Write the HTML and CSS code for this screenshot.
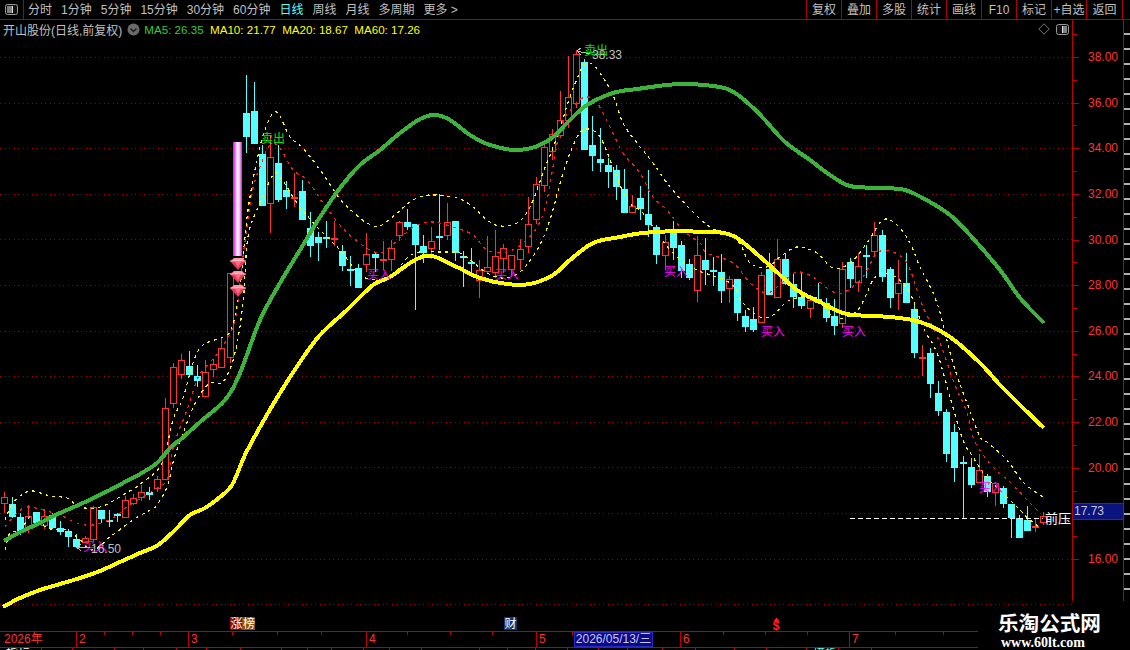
FILE: index.html
```html
<!DOCTYPE html>
<html lang="zh-CN">
<head>
<meta charset="utf-8">
<title>开山股份</title>
<link rel="stylesheet" href="styles.css">
</head>
<body>
<div class="page">
  <header class="toolbar">
    <div class="panel-toggle">
      <svg class="panel-icon" width="13" height="11" viewBox="0 0 13 11">
        <rect class="pi-frame" x="0.5" y="0.5" width="12" height="10" rx="2"/>
        <rect class="pi-left" x="2" y="2" width="5" height="7"/>
        <rect class="pi-mid" x="7" y="2" width="1" height="7"/>
      </svg>
    </div>
    <nav class="periods">
      <span>分时</span><span>1分钟</span><span>5分钟</span><span>15分钟</span><span>30分钟</span><span>60分钟</span>
      <span class="active">日线</span><span>周线</span><span>月线</span><span>多周期</span><span>更多 &gt;</span>
    </nav>
    <div class="actions">
      <span>复权</span><span>叠加</span><span>多股</span><span>统计</span><span>画线</span><span>F10</span><span>标记</span><span>+自选</span><span>返回</span>
    </div>
  </header>

  <div class="main">
    <section class="chart-pane">
      <div class="info">
        <span class="title">开山股份(日线,前复权)</span>
        <svg class="chev" width="13" height="13" viewBox="0 0 13 13">
          <circle class="chev-bg" cx="6.5" cy="6.5" r="6"/>
          <path class="chev-line" d="M3.5 5.5 L6.5 8.5 L9.5 5.5"/>
        </svg>
        <span class="ma green">MA5: 26.35</span>
        <span class="ma yellow">MA10: 21.77</span>
        <span class="ma yellow">MA20: 18.67</span>
        <span class="ma yellow">MA60: 17.26</span>
        <span class="info-tools">
          <svg width="12" height="12" viewBox="0 0 12 12"><path class="tool-line" d="M6 0.8 L11.2 6 L6 11.2 L0.8 6 Z"/></svg>
          <svg width="13" height="11" viewBox="0 0 13 11">
            <rect class="pi-frame" x="0.5" y="0.5" width="12" height="10" rx="2"/>
            <rect class="pi-right" x="7" y="2" width="4" height="7"/>
            <rect class="pi-mid" x="6" y="2" width="1" height="7"/>
          </svg>
        </span>
      </div>
      <svg id="chart" class="chart" width="1072" height="593" viewBox="0 38 1072 593">
        <defs>
          <linearGradient id="pinkbar" x1="0" x2="1" y1="0" y2="0">
            <stop offset="0" stop-color="#c81ec8"/>
            <stop offset="0.25" stop-color="#f070f0"/>
            <stop offset="0.5" stop-color="#ffffff"/>
            <stop offset="0.75" stop-color="#f8b0f8"/>
            <stop offset="1" stop-color="#c81ec8"/>
          </linearGradient>
          <g id="gem">
            <polygon class="gem-body" points="-8,-3 -4,-6 4,-6 8,-3 0,6"/>
            <polygon class="gem-top" points="-4,-6 4,-6 6,-3 -6,-3"/>
            <polygon class="gem-shine" points="-3,-2 3,-2 0,3"/>
            <path class="gem-edge" d="M-8 -3 L8 -3"/>
          </g>
        </defs>
        <g id="grid"></g>
        <g id="candles"></g>
        <g id="lines"></g>
        <rect class="pink" x="233" y="142" width="9" height="114"/>
        <use href="#gem" x="238" y="264"/>
        <use href="#gem" x="238" y="277"/>
        <use href="#gem" x="238" y="291"/>
        <line class="last-dash" x1="850" y1="518.5" x2="1043" y2="518.5"/>
        <text class="sig sell" x="261" y="143">卖出</text>
        <text class="sig sell" x="584" y="55">卖出</text>
        <text class="sig buy" x="367" y="279">买入</text>
        <text class="sig buy" x="495" y="279">买入</text>
        <text class="sig buy" x="664" y="276">买入</text>
        <text class="sig buy" x="761" y="336">买入</text>
        <text class="sig buy" x="842" y="336">买入</text>
        <text class="sig buy" x="979" y="492">买入</text>
        <text class="sig buy" x="83" y="551">买入</text>
        <path class="arrow" d="M90 547.5 H77 M81 544 L77 547.5 L81 551"/>
        <text class="extreme" x="91" y="553">16.50</text>
        <path class="arrow" d="M590 54 L577 51 M581 48 L577 51 L581 55"/>
        <text class="extreme" x="592" y="59">38.33</text>
        <text class="press" x="1045" y="523">前压力</text>
        <rect class="mk-red" x="230" y="617" width="13" height="13"/>
        <rect class="mk-brown" x="242" y="617" width="13" height="13"/>
        <rect class="mk-blue" x="504" y="617" width="13" height="13"/>
        <text class="mk-text" x="230.500" y="627.500">涨</text>
        <text class="mk-text" x="243" y="627.500">榜</text>
        <text class="mk-text" x="504.500" y="627.500">财</text>
        <path class="mk-up" d="M776 618 L779 621 H773 Z"/>
        <text class="mk-dollar" x="776" y="630">$</text>
      </svg>
    </section>
    <aside class="axis">
      <div class="tick"><span>38.00</span></div>
      <div class="tick"><span>36.00</span></div>
      <div class="tick"><span>34.00</span></div>
      <div class="tick"><span>32.00</span></div>
      <div class="tick"><span>30.00</span></div>
      <div class="tick"><span>28.00</span></div>
      <div class="tick"><span>26.00</span></div>
      <div class="tick"><span>24.00</span></div>
      <div class="tick"><span>22.00</span></div>
      <div class="tick"><span>20.00</span></div>
      <div class="tick"><span>18.00</span></div>
      <div class="tick"><span>16.00</span></div>
      <div class="price-tag">17.73</div>
    </aside>
    <div class="ruler"></div>
  </div>

  <footer class="timeline">
    <div class="t-cell">2026年</div>
    <div class="t-cell m">2</div>
    <div class="t-cell m">3</div>
    <div class="t-cell m">4</div>
    <div class="t-cell m">5</div>
    <div class="t-date">2026/05/13/三</div>
    <div class="t-cell"></div>
    <div class="t-cell m">6</div>
    <div class="t-cell m">7</div>
    <svg class="t-ticks" width="978" height="3" viewBox="0 0 978 3">
      <path d="M104 0V3M132 0V3M160 0V3M232 0V3M277 0V3M321 0V3M407 0V3M450 0V3M492 0V3M572 0V3M723 0V3M765 0V3M807 0V3M895 0V3M943 0V3"/>
    </svg>
  </footer>
  <div class="tabs">
    <i>指标</i><i></i><i></i><i></i><i></i><i></i><i></i><i></i><i></i><i></i><i></i><i></i><i></i><i></i><i></i><i></i><i></i><i></i><i></i><i></i><i></i><i></i><i></i><i></i><i class="cy">模板</i><i></i>
  </div>

  <div class="watermark">
    <div class="wm-cn">乐淘公式网</div>
    <div class="wm-en">www.60lt.com</div>
  </div>
</div>
<script src="chart.js"></script>
</body>
</html>
```
FILE: styles.css
```css
* { box-sizing: border-box; }
html, body { margin: 0; background: #000; }
body {
  width: 1130px;
  height: 650px;
  overflow: hidden;
  font-family: "Liberation Sans", "Noto Sans CJK SC", sans-serif;
  font-size: 12px;
  color: #c0c0c0;
}
.page { position: relative; width: 1130px; height: 650px; display: flex; flex-direction: column; }

/* toolbar */
.toolbar {
  height: 20px;
  display: flex;
  align-items: stretch;
  border-bottom: 1px solid #b00000;
  line-height: 21px;
  font-size: 12px;
}
.panel-toggle {
  width: 24px;
  border-right: 1px solid #b00000;
  display: flex;
  align-items: center;
  padding-left: 5px;
}
.pi-frame { fill: #111; stroke: #999; }
.pi-left { fill: #808080; }
.pi-right { fill: #808080; }
.pi-mid { fill: #e0e0e0; }
.periods { display: flex; gap: 9px; margin-left: 4px; }
.periods .active { color: #55ffff; }
.actions { margin-left: auto; margin-right: 7px; display: flex; }
.actions span {
  width: 35px;
  text-align: center;
  border-left: 1px solid #b00000;
}
.actions span:last-child { border-right: 1px solid #b00000; width: 37px; }

/* main */
.main { display: flex; align-items: flex-start; height: 611px; }
.chart-pane { width: 1072px; flex: none; display: flex; flex-direction: column; }
.info {
  height: 18px;
  display: flex;
  align-items: center;
  padding-left: 3px;
  padding-right: 3px;
  white-space: nowrap;
}
.title { color: #c0c0c0; }
.chev { margin-left: 5px; margin-right: 4px; }
.chev-bg { fill: #6a6a6a; }
.chev-line { fill: none; stroke: #1a1a1a; stroke-width: 1.4; }
.ma { font-size: 11.6px; margin-right: 6.4px; letter-spacing: 0; }
.green { color: #3cc83c; }
.yellow { color: #ffff00; }
.info-tools { margin-left: auto; display: flex; align-items: center; gap: 6px; }
.tool-line { fill: none; stroke: #777; }

.chart { display: block; overflow: hidden; shape-rendering: crispEdges; }
.grid-line { stroke: #a00000; stroke-width: 1; stroke-dasharray: 1 3.5; }
.wick-r { stroke: #ff3232; stroke-width: 1; }
.wick-c { stroke: #55ffff; stroke-width: 1; }
.body-r { fill: #000; stroke: #ff3232; stroke-width: 1; }
.flat-r { fill: #ff3232; }
.body-c { fill: #55ffff; }
.ma-long { fill: none; stroke: #3cb43c; stroke-width: 4; stroke-linejoin: round; }
.ma-mid { fill: none; stroke: #ffff00; stroke-width: 4; stroke-linejoin: round; }
.band { fill: none; stroke: #ffff00; stroke-width: 1.2; stroke-dasharray: 3 4; }
.ma-red { fill: none; stroke: #ff2020; stroke-width: 1.2; stroke-dasharray: 3 4.5; }
.pink { fill: url(#pinkbar); }
.gem-body { fill: #e83a5a; shape-rendering: auto; }
.gem-top { fill: #ff9aa8; shape-rendering: auto; }
.gem-shine { fill: #ff6a88; shape-rendering: auto; }
.gem-edge { stroke: #fff0f0; stroke-width: 0.7; fill: none; shape-rendering: auto; }
.last-dash { stroke: #fff; stroke-width: 1; stroke-dasharray: 5 3; }
.sig { font-family: "Noto Sans CJK SC", sans-serif; font-size: 12px; shape-rendering: auto; }
.sell { fill: #00e800; }
.buy { fill: #ff00ff; }
.extreme { font-size: 12px; fill: #c0c0c0; }
.arrow { fill: none; stroke: #c0c0c0; stroke-width: 1; }
.press { font-family: "Noto Sans CJK SC", sans-serif; font-size: 13px; fill: #fff; }
.mk-red { fill: #8c0a0a; }
.mk-brown { fill: #8a5000; }
.mk-blue { fill: #0a3a78; }
.mk-text { font-family: "Noto Sans CJK SC", sans-serif; font-size: 12px; fill: #fff; }
.mk-up { fill: #ff2020; }
.mk-dollar { font-size: 12px; font-weight: bold; fill: #ff2020; text-anchor: middle; }

/* price axis */
.axis {
  position: relative;
  width: 51px;
  flex: none;
  height: 581px;
  padding-top: 14.2px;
  border-left: 1px solid #c00000;
}
.tick {
  position: relative;
  height: 45.65px;
  display: flex;
  align-items: center;
  padding-left: 15px;
  color: #ff3232;
  font-size: 12px;
}
.tick::before {
  content: "";
  position: absolute;
  left: 0;
  top: 50%;
  width: 6px;
  height: 1px;
  background: #c00000;
}
.tick::after {
  content: "";
  position: absolute;
  left: 0;
  top: 0;
  width: 4px;
  height: 1px;
  background: #c00000;
}
.price-tag {
  position: absolute;
  left: 0;
  right: 0;
  top: 483px;
  height: 17px;
  background: #0a1480;
  border-top: 1px solid #c00000;
  border-bottom: 1px solid #c00000;
  color: #c8c8c8;
  line-height: 15px;
  padding-left: 1px;
}
.ruler {
  width: 7px;
  height: 581px;
  flex: none;
  border-left: 1px solid #c00000;
  background: repeating-linear-gradient(to bottom, #000 0, #000 13px, #b0b0b0 13px, #b0b0b0 15px);
}

/* time axis */
.timeline {
  position: relative;
  width: 978px;
  height: 16px;
  display: grid;
  grid-template-columns: 76px 112px 178px 170px 38px 79px 27px 169px 129px;
  border-top: 1px solid #c00000;
  color: #ff3232;
  font-size: 12px;
  line-height: 14px;
}
.t-cell { padding-left: 4px; white-space: nowrap; }
.t-cell.m { border-left: 1px solid #c00000; padding-left: 2px; }
.t-date {
  background: #0a0a8c;
  border: 1px solid #2a2ac0;
  color: #c8c8e0;
  text-align: center;
  line-height: 13px;
  white-space: nowrap;
}
.t-ticks { position: absolute; left: 0; top: 0; }
.t-ticks path { stroke: #c00000; stroke-width: 1; fill: none; shape-rendering: crispEdges; }

/* tab strip cut off at the bottom */
.tabs {
  width: 978px;
  height: 3px;
  overflow: hidden;
  border-top: 1px solid #c00000;
  display: grid;
  grid-template-columns: 42px 31px 42px 29px 33px 30px 34px 41px 26px 24px 32px 26px 32px 58px 28px 28px 32px 31px 29px 35px 33px 39px 32px 40px 32px 33px;
}
.tabs i {
  font-style: normal;
  font-size: 12px;
  line-height: 12px;
  border-right: 1px solid #c00000;
  color: #fff;
  padding-left: 6px;
}
.tabs .cy { color: #55ffff; }

/* watermark */
.watermark { position: absolute; left: 998px; top: 609px; }
.wm-cn {
  font-family: "Noto Sans CJK SC", sans-serif;
  font-weight: bold;
  font-size: 20.6px;
  line-height: 26px;
  color: #fff;
  white-space: nowrap;
}
.wm-en {
  font-family: "Liberation Serif", serif;
  font-weight: bold;
  font-size: 14px;
  line-height: 15px;
  color: #fff;
  padding-left: 3px;
  white-space: nowrap;
}
```
FILE: chart.js
```js
var NS = 'http://www.w3.org/2000/svg';
function el(parent, name, cls, attrs) {
  var n = document.createElementNS(NS, name);
  if (cls) n.setAttribute('class', cls);
  for (var k in attrs) n.setAttribute(k, attrs[k]);
  parent.appendChild(n);
  return n;
}

/* high, body top, body bottom, low, r = up (hollow red) / c = down (cyan) */
var candles = [
[492,497,503,513,'r'],[497,504,517,518,'c'],[513,517,532,535,'c'],[505,516,527,533,'r'],[512,512,523,525,'c'],
[509,516,525,529,'r'],[513,515,528,529,'c'],[521,528,532,535,'c'],[529,531,537,547,'c'],[534,539,547,547,'c'],
[536,538,542,543,'r'],[506,507,539,541,'r'],[510,510,519,523,'c'],[510,520,521,527,'c'],[513,514,516,522,'c'],
[496,500,517,517,'r'],[494,498,503,505,'r'],[485,492,497,501,'r'],[487,492,495,500,'c'],[476,479,488,492,'r'],
[398,408,479,480,'r'],[363,367,403,408,'r'],[354,360,374,379,'r'],[351,366,375,377,'c'],[365,376,381,387,'c'],
[360,372,396,397,'r'],[359,364,369,377,'r'],[338,348,367,368,'r'],[273,273,357,363,'r'],null,
[75,113,137,153,'c'],[82,111,144,144,'c'],[145,154,206,206,'c'],[135,157,203,233,'r'],[145,163,200,202,'c'],
[181,190,197,209,'c'],[173,197,199,207,'r'],[180,191,220,220,'c'],[212,228,246,257,'c'],[232,237,243,261,'c'],
[221,237,238,248,'c'],[221,238,239,246,'r'],[245,251,266,271,'c'],[256,269,270,286,'c'],[264,268,288,288,'c'],
[233,254,264,272,'r'],[252,254,258,272,'c'],[241,259,260,270,'r'],[240,248,259,271,'r'],[221,222,235,241,'r'],
[209,222,227,230,'c'],[224,224,245,310,'c'],[235,246,253,263,'c'],[227,241,248,259,'r'],[194,236,237,250,'c'],
[203,222,235,240,'r'],[221,221,253,261,'c'],[251,256,258,287,'c'],[248,262,264,274,'c'],[260,270,280,298,'r'],
[236,267,271,273,'r'],[230,256,272,278,'r'],[244,248,258,273,'r'],[255,255,269,277,'r'],[239,249,259,270,'r'],
[197,224,246,253,'r'],[177,184,219,224,'r'],[143,147,185,192,'r'],[129,134,151,160,'r'],[91,120,135,138,'r'],
[56,97,120,128,'r'],[50,54,103,108,'r'],[59,62,150,150,'c'],[116,145,156,171,'c'],[128,159,163,172,'c'],
[158,165,172,188,'c'],[165,170,187,200,'c'],[169,189,213,213,'c'],[195,206,212,212,'r'],[186,198,209,220,'c'],
[170,214,225,237,'c'],[225,227,255,264,'c'],[235,242,255,270,'r'],[221,229,248,260,'c'],[241,245,271,278,'c'],
[259,264,278,280,'c'],[236,255,290,302,'r'],[238,260,270,285,'c'],[257,270,272,286,'c'],[254,272,291,303,'c'],
[276,279,288,303,'r'],[279,279,313,321,'c'],[310,316,327,332,'c'],[307,319,330,332,'c'],[272,275,322,323,'r'],
[253,269,295,295,'c'],[239,259,297,297,'r'],[253,259,284,285,'c'],[273,284,297,308,'c'],[272,297,306,309,'c'],
[295,300,308,318,'r'],[283,299,303,304,'c'],[298,303,318,322,'c'],[299,316,326,335,'c'],[262,269,323,328,'r'],
[258,262,279,288,'c'],[253,266,282,292,'r'],[245,255,257,278,'c'],[222,235,251,257,'r'],[230,235,277,282,'c'],
[267,269,298,308,'c'],[260,283,293,310,'r'],[253,283,303,303,'c'],[305,309,353,358,'c'],[345,357,358,376,'r'],
[348,353,384,398,'c'],[381,393,411,416,'c'],[409,412,454,462,'c'],[424,432,468,482,'c'],[456,462,464,518,'c'],
[458,467,485,488,'c'],[454,470,482,482,'r'],[474,476,492,497,'c'],[482,483,492,506,'r'],[486,488,504,508,'c'],
[504,504,518,538,'c'],[515,518,538,538,'c'],[506,520,531,531,'c'],[518,526,527,532,'r'],[512,516,522,525,'r']
];

var green = [[4,541],[20,532],[40,523],[60,513],[83,503],[110,490],[123,483],[140,474],[157,463],[170,448],[180,440],[200,422],[225,400],[240,373],[260,320],[280,283],[300,250],[320,217],[340,188],[360,165],[380,150],[400,133],[420,119],[435,115],[450,120],[470,135],[490,145],[515,150],[535,147],[553,137],[570,120],[587,105],[613,93],[637,89],[680,84],[720,87],[735,93],[750,105],[765,120],[785,142],[810,160],[830,175],[850,186],[880,188],[905,190],[930,202],[950,215],[970,235],[1000,270],[1020,298],[1044,323]];
var yellow = [[3,607],[20,598],[40,590],[60,584],[80,578],[100,571],[120,562],[140,553],[158,545],[175,530],[190,515],[205,508],[220,497],[232,485],[245,455],[260,427],[280,393],[300,362],[320,335],[347,310],[373,285],[390,277],[415,260],[432,256],[457,267],[480,278],[507,284],[530,284],[553,275],[570,260],[593,243],[620,237],[643,233],[680,231],[700,232],[717,232],[737,238],[767,263],[797,290],[820,302],[847,314],[890,317],[920,322],[950,337],[980,363],[1000,385],[1020,405],[1044,428]];
var upper = [[5,520],[13,503],[23,494],[33,491],[50,496],[67,498],[80,507],[100,507],[123,495],[143,482],[162,463],[173,420],[183,398],[193,363],[203,345],[223,337],[232,327],[240,287],[248,210],[260,147],[270,118],[278,113],[290,137],[303,148],[320,170],[340,199],[353,212],[367,223],[380,226],[397,213],[413,200],[430,195],[457,198],[473,207],[487,220],[500,226],[517,223],[530,207],[543,173],[557,137],[570,97],[582,68],[590,63],[600,73],[613,95],[623,123],[637,143],[653,163],[670,187],[693,212],[710,227],[737,240],[750,263],[767,267],[780,257],[797,247],[817,253],[833,268],[850,263],[867,243],[883,220],[897,225],[910,243],[920,267],[937,303],[953,363],[967,403],[980,437],[987,442],[1007,460],[1023,482],[1043,497]];
var lower = [[5,550],[10,533],[20,530],[33,515],[47,528],[67,530],[80,540],[93,550],[110,537],[133,520],[150,510],[157,505],[167,487],[173,463],[178,447],[190,415],[198,398],[210,383],[223,382],[235,353],[243,303],[248,237],[260,203],[273,175],[280,177],[300,207],[320,230],[340,250],[363,277],[390,277],[407,258],[420,252],[440,252],[460,253],[473,262],[487,273],[503,278],[520,272],[537,250],[550,220],[563,173],[577,137],[587,129],[600,137],[613,167],[627,200],[643,213],[660,237],[677,257],[697,270],[730,283],[743,303],[760,317],[773,315],[790,300],[817,298],[833,317],[847,317],[860,307],[873,280],[883,273],[897,278],[910,293],[923,327],[937,353],[950,397],[963,440],[973,457],[987,478],[1000,490],[1017,507],[1030,520],[1042,529]];
var redMa = [[5,527],[17,513],[27,507],[43,510],[60,515],[77,523],[93,525],[113,518],[127,507],[143,497],[157,488],[167,480],[172,453],[178,433],[187,410],[197,380],[203,370],[220,350],[235,320],[243,257],[252,193],[260,167],[270,145],[280,148],[293,170],[307,180],[323,203],[340,225],[353,238],[370,250],[383,252],[400,238],[417,225],[433,222],[453,227],[473,235],[487,250],[507,252],[523,243],[537,227],[547,200],[560,130],[573,107],[585,97],[597,103],[610,127],[623,153],[640,173],[653,197],[667,210],[683,230],[700,243],[707,253],[733,263],[750,283],[767,293],[783,282],[797,272],[813,277],[830,290],[843,293],[863,277],[877,253],[893,252],[907,263],[917,290],[923,307],[940,343],[953,380],[967,413],[975,442],[993,467],[1010,482],[1027,500],[1038,511]];

var grid = document.getElementById('grid');
for (var g = 0; g < 13; g++) {
  var gy = Math.round(57 + 45.6 * g) + 0.5;
  el(grid, 'line', 'grid-line', { x1: 0, x2: 1072, y1: gy, y2: gy });
}

var box = document.getElementById('candles');
candles.forEach(function (c, i) {
  if (!c) return;
  var cx = Math.round(4 + 8.055 * i);
  var high = c[0], top = c[1], bot = c[2], low = c[3], kind = c[4];
  if (kind === 'c') {
    el(box, 'line', 'wick-c', { x1: cx + 0.5, x2: cx + 0.5, y1: high, y2: low });
    el(box, 'rect', 'body-c', { x: cx - 3, y: top, width: 7, height: Math.max(bot - top, 2) });
  } else {
    el(box, 'line', 'wick-r', { x1: cx + 0.5, x2: cx + 0.5, y1: high, y2: low });
    if (bot - top <= 2) {
      el(box, 'rect', 'flat-r', { x: cx - 3, y: top, width: 7, height: 2 });
    } else {
      el(box, 'rect', 'body-r', { x: cx - 2.5, y: top + 0.5, width: 6, height: bot - top });
    }
  }
});

/* Catmull-Rom curve through the read-off points, so the averages bend smoothly */
function smooth(p) {
  var d = 'M' + p[0][0] + ' ' + p[0][1];
  for (var i = 0; i < p.length - 1; i++) {
    var a = p[i - 1] || p[i], b = p[i], c = p[i + 1], e = p[i + 2] || c;
    d += ' C' + (b[0] + (c[0] - a[0]) / 6).toFixed(1) + ' ' + (b[1] + (c[1] - a[1]) / 6).toFixed(1) +
         ' ' + (c[0] - (e[0] - b[0]) / 6).toFixed(1) + ' ' + (c[1] - (e[1] - b[1]) / 6).toFixed(1) +
         ' ' + c[0] + ' ' + c[1];
  }
  return d;
}
var lines = document.getElementById('lines');
function curve(points, cls) { el(lines, 'path', cls, { d: smooth(points) }); }
curve(upper, 'band');
curve(lower, 'band');
curve(redMa, 'ma-red');
curve(green, 'ma-long');
curve(yellow, 'ma-mid');
```
